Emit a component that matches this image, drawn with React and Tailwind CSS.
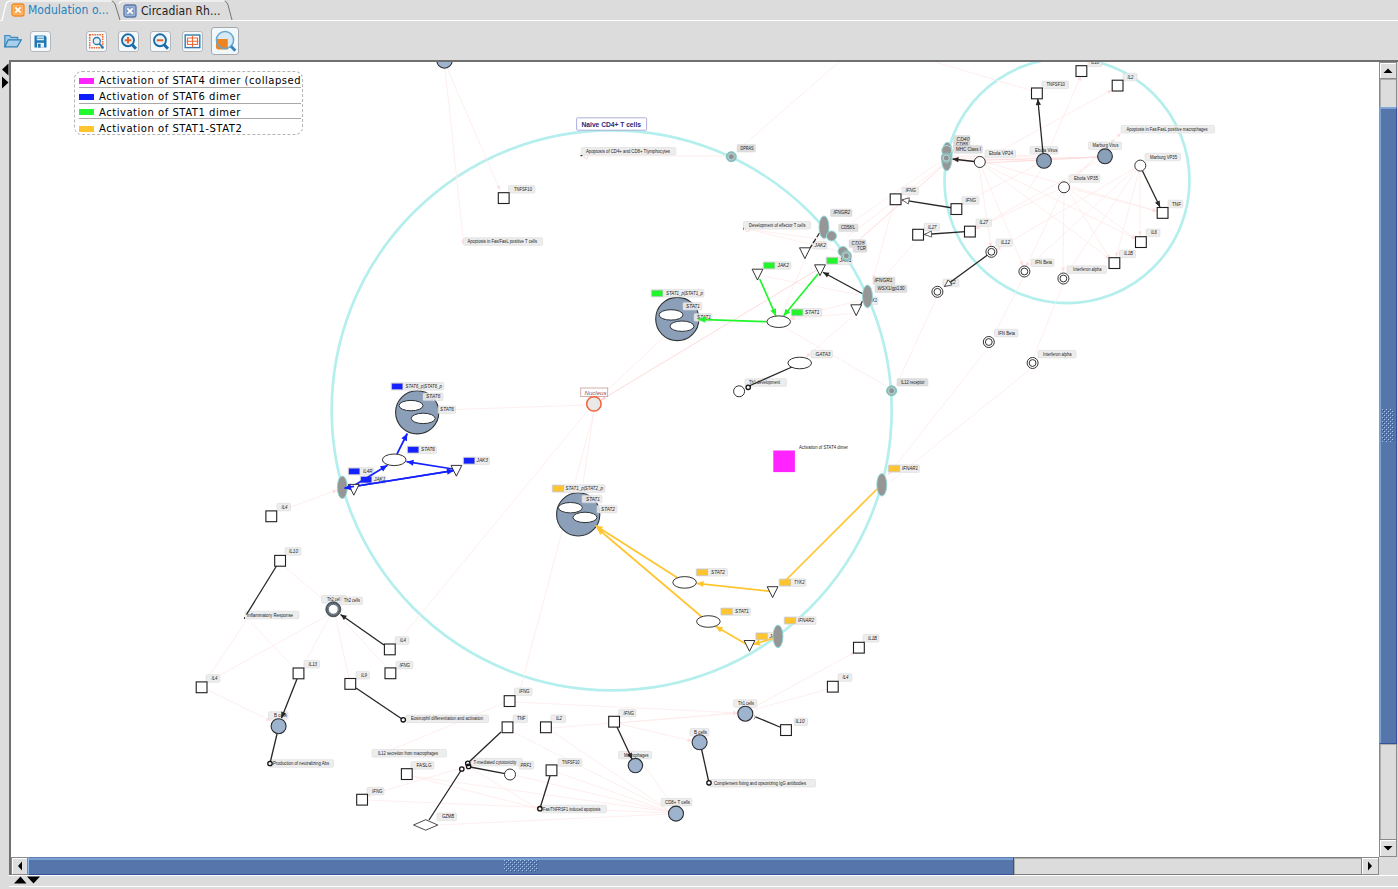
import React from "react";

const SANS = "'Liberation Sans', Arial, sans-serif";

/* ---------- network data ---------- */

// [x1, y1, x2, y2, head]
const faintEdges = [
  [445, 68, 463, 237], [447, 68, 500, 190, 1], [731, 156, 584, 156],
  [839, 62, 739, 149, 1], [946, 158, 852, 222], [747, 229, 826, 240], [747, 229, 842, 252],
  [946, 162, 848, 236], [895, 199, 873, 280, 1], [594, 403, 690, 312],
  [805, 259, 781, 316], [860, 295, 763, 276], [862, 300, 790, 318, 1], [856, 313, 790, 319, 1],
  [860, 310, 806, 357, 1], [784, 327, 886, 386], [918, 240, 871, 290],
  [1024, 276, 994, 335], [1063, 284, 1034, 356], [937, 297, 896, 386],
  [988, 348, 888, 475, 1], [1032, 368, 890, 482], [594, 411, 520, 690], [594, 411, 582, 490],
  [590, 408, 397, 643], [588, 405, 440, 410], [280, 511, 337, 490, 1],
  [1033, 91, 935, 62], [1044, 161, 1081, 76, 1], [983, 160, 1112, 90, 1], [1064, 187, 1121, 133, 1],
  [1044, 161, 952, 158], [1044, 157, 952, 156], [1044, 155, 952, 157],
  [979, 166, 991, 247, 1], [981, 166, 1023, 266, 1], [983, 165, 1110, 259, 1], [983, 164, 1136, 239, 1],
  [985, 162, 1157, 211, 1], [1044, 161, 960, 205, 1], [1105, 157, 975, 229, 1],
  [1064, 192, 1063, 272, 1], [1064, 187, 1026, 267, 1], [1064, 187, 974, 229, 1],
  [1068, 190, 1110, 259, 1], [1069, 189, 1136, 239, 1], [1069, 188, 1157, 211, 1], [1068, 185, 1115, 139, 1],
  [1140, 170, 1140, 236, 1], [1139, 171, 1116, 257, 1], [1136, 168, 1030, 265, 1],
  [1137, 169, 1067, 273, 1], [1135, 168, 996, 250, 1], [1044, 165, 1028, 190],
  [284, 566, 333, 608], [248, 618, 206, 680], [248, 619, 294, 668], [330, 614, 208, 682],
  [331, 614, 303, 666], [335, 615, 349, 678], [338, 614, 387, 668], [208, 690, 271, 721, 1],
  [509, 701, 374, 757, 1], [515, 702, 738, 713, 1], [552, 728, 738, 713, 1], [511, 731, 670, 811],
  [550, 730, 670, 811], [614, 724, 674, 807], [620, 724, 692, 741, 1], [620, 723, 738, 713, 1],
  [468, 766, 366, 796, 1], [411, 776, 540, 809], [411, 776, 670, 812], [367, 800, 670, 813],
  [438, 825, 670, 814], [514, 775, 670, 812], [556, 772, 670, 812], [466, 765, 540, 810, 1],
  [749, 710, 855, 652, 1], [749, 711, 828, 689],
];

const strongFaintEdges = [
  [820, 268, 601, 400, 1], [984, 163, 1100, 157], [952, 161, 1098, 157], [946, 163, 850, 248],
];

// [x1, y1, x2, y2, head, color]
const K = "#262626";
const B = "#1522ff";
const G = "#22f52c";
const Y = "#ffc52e";
const edges = [
  [864, 294.5, 823, 272.3, "s", K], [862.5, 301, 859.5, 307, "", K], [819.5, 233, 810, 248, "d", K],
  [792, 367, 749, 386, "", K], [956, 208.5, 902, 199.8, "o", K], [969, 231.4, 924.5, 234.5, "o", K],
  [1043, 153, 1037.8, 99, "s", K], [974, 161.5, 952.5, 159, "s", K], [1142.5, 171, 1160, 207, "s", K],
  [987.5, 255, 944.5, 286.5, "o", K],
  [276.5, 566, 246.5, 614.5, "", K], [384, 645, 340.5, 614.5, "s", K], [297, 679, 281.5, 718, "s", K],
  [277, 734, 270.3, 762, "", K], [356, 688, 402, 719, "", K],
  [501, 732, 469, 762, "", K], [505, 773.7, 470, 767, "", K], [461, 770.5, 429, 820, "", K],
  [550, 776, 540.4, 807, "", K], [617, 727, 632, 759, "s", K],
  [781, 727.5, 755.5, 716.8, "b", K], [701.5, 749, 708.6, 781, "", K],
  [397, 454, 407.3, 433.5, "s", B], [350, 488, 387.5, 465.3, "s", B], [453, 469, 406.5, 461.7, "s", B],
  [345, 488, 454, 470.5, "s", B], [453, 470.7, 344.5, 488, "s", B],
  [766.5, 321.7, 698.5, 319.4, "s", G], [759.7, 279, 776, 316, "s", G], [818, 274, 783.5, 316, "s", G],
  [677, 577.5, 595.5, 525.5, "s", Y], [702, 617, 597, 528, "s", Y], [771, 591.3, 696.5, 583.3, "s", Y],
  [746, 644, 715.5, 626.3, "s", Y], [776, 637.5, 753, 644.5, "s", Y], [877, 489, 785, 581, "", Y],
];

const squares = [
  [503.6, 198], [895.5, 199.2], [918, 234.6], [1081.3, 71], [1117.5, 85.5], [1036.8, 93.3],
  [956.3, 209], [969.8, 231.5], [1162.5, 212.8], [1140.8, 242], [1114.3, 263],
  [271.2, 516.2], [280, 560.7], [201.5, 687.2], [298.4, 673.3], [389.7, 649.3], [390.3, 673.2],
  [350.2, 683.8], [406.7, 774], [362, 799.6], [509.5, 701], [507.4, 727.2], [545.8, 727.2],
  [614, 721.6], [551.4, 770.2], [858.8, 647.6], [832.7, 686.6], [785.9, 730],
];

const triangles = [
  [804.9, 247.8], [757.5, 269.2], [820, 264.8], [856.2, 304.8],
  [456.4, 465.4], [353.8, 484.4], [772.6, 586.7], [749.5, 640.5],
];

const openOvals = [
  [778.7, 321.7], [799.7, 363], [394.2, 459.8], [684.6, 582.4], [708.4, 621.5],
];

const openCircles = [
  [979.8, 162], [1140.3, 165.6], [1064, 187.3], [739.1, 391.3], [510, 774.5],
];

const ringCircles = [
  [991.4, 251.8], [1024.4, 271.5], [1063.4, 278.5], [937.4, 291.8], [988.8, 342], [1032.6, 363],
];

const cellCircles = [
  [444.5, 60.5, 7.7], [1044, 160.9, 7.4], [1105, 156.3, 7.4], [278.6, 726.2, 7.5],
  [635.4, 765.6, 7.2], [676, 813.6, 7.5], [745.3, 713.7, 7.5], [699.6, 742.3, 7.5],
];

const complexes = [
  [417.2, 412.3, 411, 405.6, 423.2, 418.4],
  [578.2, 514.4, 570.4, 507.7, 585, 517.4],
  [677.3, 319, 671, 314.9, 682, 326.2],
];

const receptors = [
  [824, 227.2, 11.3], [867.5, 296.4, 11.3], [881.8, 484.8, 11.3], [778, 636.4, 11.3], [342.3, 487.3, 11.3],
];

const dots = [
  [748.2, 387.3], [270, 763.5], [403.2, 719.8], [467.8, 763.4], [468.6, 766.4], [461.8, 769],
  [539.9, 808.7], [709, 782.8],
];

// [x, y, width, text, textX, textWidth, swatch color, tone]
const L = "#eaeaea";
const D = "#d9d9d9";
const labels = [
  [581.3, 147.5, 94.5, "Apoptosis of CD4+ and CD8+ Tlymphocytes", 586, 84],
  [737, 144.5, 18.5, "DPRAS", 740.5, 13, 0, D],
  [508.5, 185.5, 26.5, "TNFSF10", 514, 18],
  [463.5, 237.7, 79, "Apoptosis in Fas/FasL positive T cells", 467.5, 69.5],
  [830.5, 209, 21.5, "IFNGR2", 833.5, 16.5, 0, D],
  [838.5, 224, 19.5, "CD58/L", 841, 14, 0, D],
  [849, 239.7, 17, "CD28", 851.5, 13, 0, D],
  [853, 244.7, 14, "TCR", 857, 9, 0, D],
  [812, 241.5, 15, "JAK2", 814.5, 11.5],
  [743.5, 221.5, 67, "Development of effector T cells", 749, 56.5],
  [763, 261.7, 28, "JAK2", 777.5, 11.5, G],
  [826, 257, 26, "JAK1", 839.5, 12, G],
  [791, 308.6, 31, "STAT1", 805, 14.5, G],
  [811, 350.3, 21.5, "GATA3", 815.5, 15],
  [745, 378.7, 41.5, "Th1 development", 749, 31],
  [897, 378.5, 31, "IL12 receptor", 901, 23.5, 0, D],
  [873, 277, 22, "IFNGR1", 874.5, 18, 0, D],
  [875, 285, 32, "WSX1/gp130", 877.5, 27, 0, D],
  [866, 297, 12, "JAK1", 867, 10],
  [902, 187, 16.5, "IFNG", 905.5, 10.5],
  [924, 223.3, 15.5, "IL27", 928, 8.5],
  [1088, 59, 14, "IL10", 1091, 8],
  [1123, 73.2, 14, "IL2", 1127.5, 6],
  [1042, 81, 26.5, "TNFSF10", 1046.5, 18.5],
  [1121, 125.5, 93.5, "Apoptosis in Fas/FasL positive macrophages", 1126.5, 81],
  [1030, 146.5, 28, "Ebola Virus", 1035, 22.5],
  [1088.5, 142, 33, "Marburg Virus", 1092.5, 26],
  [985, 150, 30.5, "Ebola VP24", 989, 24],
  [1145, 153.2, 35.5, "Marburg VP35", 1150, 27],
  [1069, 174.7, 31, "Ebola VP35", 1074, 24],
  [1168, 200.2, 15, "TNF", 1172, 9],
  [962, 196.7, 17, "IFNG", 965.5, 10.5],
  [976, 219, 15.5, "IL27", 979.5, 8.5],
  [996, 239, 16.5, "IL12", 1001, 9],
  [1031, 259, 23, "IFN Beta", 1035, 17],
  [1067, 265.8, 39.5, "Interferon alpha", 1073, 28.5],
  [1146, 229, 14, "IL6", 1151, 6],
  [1119.5, 250, 16, "IL1B", 1124, 9],
  [943, 279, 16, "IL12", 946.5, 9],
  [994.5, 329.3, 23.5, "IFN Beta", 998, 17],
  [1038, 350.3, 38, "Interferon alpha", 1043, 28.5],
  [953.5, 135.5, 16.5, "CD40", 956.5, 13, 0, D],
  [953.5, 141, 16.5, "CD86", 956, 12, 0, D],
  [953.5, 145.6, 29, "MHC Class I", 956, 25, 0, D],
  [391, 382.6, 53, "STAT6_p|STAT6_p", 405.5, 36.5, B],
  [423, 393, 20, "STAT6", 426, 14.5],
  [438, 406, 17.5, "STAT6", 440, 14],
  [407, 446, 29.5, "STAT6", 421, 14, B],
  [463, 457, 26.5, "JAK3", 476.5, 11.5, B],
  [348, 467.5, 26, "IL4R", 363, 9.5, B],
  [360, 476, 26, "JAK1", 374, 11.5, B],
  [552, 484.8, 53, "STAT1_p|STAT2_p", 565.5, 37.5, Y],
  [582, 495.2, 20, "STAT1", 586, 14],
  [597, 505.3, 20, "STAT2", 601, 14],
  [651, 289.5, 53, "STAT1_p|STAT1_p", 666, 37, G],
  [683, 302.5, 19, "STAT1", 686, 14],
  [694, 313.6, 18, "STAT1", 697, 14],
  [888, 464.8, 31.5, "IFNAR1", 902, 16, Y],
  [277, 503.3, 13.5, "IL4", 281.5, 6],
  [285, 547.6, 16, "IL10", 289, 9],
  [321.5, 595.5, 25, "Th2 cells", 327, 15.5],
  [340, 597, 22.5, "Th2 cells", 344, 16],
  [245, 611.2, 54, "Inflammatory Response", 247, 46],
  [395, 636.7, 14, "IL4", 400, 6],
  [396, 661.3, 17, "IFNG", 399.5, 10.5],
  [356, 671.4, 13.5, "IL9", 361, 6],
  [304, 660.4, 15.5, "IL13", 308.5, 8.5],
  [206, 674.7, 14, "IL4", 211.5, 6],
  [268.5, 711.7, 19.5, "B cells", 274, 13],
  [270, 759.7, 63.5, "Production of neutralizing Abs", 273, 56],
  [406, 715, 82.5, "Eosinophil differentiation and activation", 411, 72],
  [372, 749.5, 74.5, "IL12 secretion from macrophages", 378, 60],
  [411, 761.6, 23, "FASLG", 416.5, 15],
  [367, 787.3, 17, "IFNG", 372, 10.5],
  [514.5, 688, 17.5, "IFNG", 519, 10.5],
  [513, 715, 14.5, "TNF", 517, 8.5],
  [551, 715, 14.5, "IL2", 556, 6],
  [618.5, 709.3, 17.5, "IFNG", 623.5, 10.5],
  [471, 758.3, 51.5, "T-mediated cytotoxicity", 473.5, 43],
  [519, 761.6, 14.5, "PRF1", 520.5, 11],
  [558, 758.7, 24, "TNFSF10", 562, 17.5],
  [618.5, 751.3, 33, "Macrophages", 624, 24.5],
  [541, 805.2, 65.5, "Fas/TNFRSF1 induced apoptosis", 543, 57.5],
  [437, 813, 19.5, "GZMB", 442, 12],
  [661, 798.3, 31, "CD8+ T cells", 665, 25],
  [696, 568.5, 31.5, "STAT2", 711, 14, Y],
  [779, 578.8, 27, "TYK2", 794, 10.5, Y],
  [720.5, 607.8, 30, "STAT1", 735, 14, Y],
  [755.5, 632.5, 21, "JAK1", 769.5, 11, Y],
  [784, 616.8, 32, "IFNAR2", 798, 16, Y],
  [863, 634.5, 16, "IL1B", 868, 9],
  [838, 673.7, 14, "IL4", 842.5, 6],
  [794, 718, 13.5, "IL10", 795.5, 9],
  [733.5, 699.7, 23.5, "Th1 cells", 738, 16],
  [690, 728.5, 19, "B cells", 694, 13],
  [709.5, 779.5, 106, "Complement fixing and opsonizing IgG antibodies", 714, 92],
];

/* ---------- drawing pieces ---------- */

function Head({ e, size, fill, stroke }) {
  const [x1, y1, x2, y2] = e;
  const a = (Math.atan2(y2 - y1, x2 - x1) * 180) / Math.PI;
  return (
    <path
      d={`M0 0L${-size} ${-size * 0.44}V${size * 0.44}Z`}
      transform={`translate(${x2} ${y2}) rotate(${a})`}
      fill={fill}
      stroke={stroke}
      strokeWidth="0.8"
    />
  );
}

const isGene = (t) => /^(STAT|JAK|TYK|IFNG|IFNAR|IL\d|GATA|PRF|GZMB|CD\d+$)/.test(t) && !t.includes(" ");

function Label({ d }) {
  const [x, y, w, text, tx, tw, swatch, tone] = d;
  return (
    <g>
      <rect x={x} y={y} width={w} height="7.6" rx="1.2" fill={tone || L} fillOpacity="0.88" stroke="#d6d6d6" strokeWidth="0.5" />
      {swatch ? <rect x={x + 0.8} y={y + 0.7} width="11" height="6.2" fill={swatch} stroke="#bdbdbd" strokeWidth="0.5" /> : null}
      <text
        x={tx}
        y={y + 5.4}
        fontSize="4.6"
        fontStyle={isGene(text) ? "italic" : "normal"}
        textLength={tw}
        lengthAdjust="spacingAndGlyphs"
        fill="#222"
      >
        {text}
      </text>
    </g>
  );
}

function Receptor({ x, y, ry }) {
  return <ellipse cx={x} cy={y} rx="5" ry={ry} fill="#969696" stroke="#8fdcda" strokeWidth="0.9" />;
}

function MembraneDot({ x, y }) {
  return (
    <g>
      <circle cx={x} cy={y} r="5" fill="#a3b5b4" stroke="#74c4c1" />
      <circle cx={x} cy={y} r="3" fill="#8f9292" stroke="#b2e8e6" strokeWidth="0.8" />
    </g>
  );
}

function Network() {
  return (
    <svg width="1368" height="795" viewBox="11 62 1368 795" className="block" style={{ fontFamily: SANS }}>
      <g fill="none" stroke="#b4efed" strokeWidth="2.7">
        <circle cx="611.7" cy="410.3" r="280" />
        <circle cx="1067" cy="180.7" r="122.5" />
      </g>

      <g stroke="#ffeaea" strokeWidth="0.8">
        {faintEdges.map((e, i) => (
          <g key={i}>
            <line x1={e[0]} y1={e[1]} x2={e[2]} y2={e[3]} />
            {e[4] ? <Head e={e} size={4.5} fill="#ffdede" stroke="none" /> : null}
          </g>
        ))}
      </g>
      <g stroke="#ffd6d6" strokeWidth="0.9">
        {strongFaintEdges.map((e, i) => (
          <g key={i}>
            <line x1={e[0]} y1={e[1]} x2={e[2]} y2={e[3]} />
            {e[4] ? <Head e={e} size={4.5} fill="#ffcfcf" stroke="none" /> : null}
          </g>
        ))}
      </g>
      <g fill="#fff" stroke="#ffc4c4" strokeWidth="0.7">
        <circle cx="586" cy="156.3" r="2" />
        <circle cx="747.5" cy="229.5" r="2" />
        <circle cx="464" cy="241.5" r="2" />
      </g>
      <g fill="#222">
        <rect x="580.5" y="155" width="2" height="1.2" />
        <rect x="743" y="227.5" width="1" height="2" />
        <rect x="244" y="617" width="1" height="2" />
      </g>

      {complexes.map((c, i) => (
        <g key={i} stroke="#303438">
          <circle cx={c[0]} cy={c[1]} r="21.6" fill="#8ba0b8" strokeWidth="1.1" />
          <ellipse cx={c[2]} cy={c[3]} rx="12" ry="5.2" fill="#fff" />
          <ellipse cx={c[4]} cy={c[5]} rx="12" ry="5.2" fill="#fff" />
        </g>
      ))}

      {labels.map((d, i) => (
        <Label key={i} d={d} />
      ))}

      {edges.map((e, i) => {
        const bright = e[5] !== K;
        return (
          <g key={i}>
            <line x1={e[0]} y1={e[1]} x2={e[2]} y2={e[3]} stroke={e[5]} strokeWidth={bright ? 1.7 : 1.3} strokeDasharray={e[4] === "d" ? "5 2" : undefined} />
            {e[4] === "s" ? <Head e={e} size={bright ? 7 : 6} fill={e[5]} stroke="none" /> : null}
            {e[4] === "o" ? <Head e={e} size={7} fill="#fff" stroke="#444" /> : null}
            {e[4] === "b" ? <path d={`M${e[2] - 1.5} ${e[3] + 2.6}L${e[2]} ${e[3]}L${e[2] - 1.8} ${e[3] - 1.6}`} fill="none" stroke="#777" strokeWidth="0.8" /> : null}
          </g>
        );
      })}

      <g fill="#fff" stroke="#1d1d1d" strokeWidth="1.1">
        {squares.map(([x, y], i) => (
          <rect key={i} x={x - 5.3} y={y - 5.3} width="10.8" height="10.8" />
        ))}
        {triangles.map(([x, y], i) => (
          <path key={i} d={`M${x - 5.4} ${y}H${x + 5.4}L${x} ${y + 10.8}Z`} strokeWidth="0.9" />
        ))}
        {openOvals.map(([x, y], i) => (
          <ellipse key={i} cx={x} cy={y} rx="11.8" ry="5.8" strokeWidth="0.9" />
        ))}
        {openCircles.map(([x, y], i) => (
          <circle key={i} cx={x} cy={y} r="5.5" strokeWidth="0.9" />
        ))}
        {ringCircles.map(([x, y], i) => (
          <g key={i} strokeWidth="0.9">
            <circle cx={x} cy={y} r="5.5" />
            <circle cx={x} cy={y} r="3.4" />
          </g>
        ))}
        <path d="M413.5 825L425.7 819.7L437.8 825L425.7 830.2Z" strokeWidth="0.8" />
      </g>

      {cellCircles.map(([x, y, r], i) => (
        <circle key={i} cx={x} cy={y} r={r} fill={y < 170 && y > 100 ? "#8a9fb8" : "#9eb3cd"} stroke="#2b2e33" strokeWidth="1.1" />
      ))}
      <circle cx="333.3" cy="609.3" r="6.4" fill="#fff" stroke="#5b6670" strokeWidth="2.2" />
      <circle cx="333.3" cy="609.3" r="7.5" fill="none" stroke="#30363c" strokeWidth="0.8" />
      <circle cx="333.3" cy="609.3" r="4.9" fill="none" stroke="#30363c" strokeWidth="0.7" />

      {receptors.map(([x, y, ry], i) => (
        <Receptor key={i} x={x} y={y} ry={ry} />
      ))}
      <circle cx="831.5" cy="236" r="5" fill="#969696" stroke="#8fdcda" />
      <circle cx="843" cy="251.5" r="5" fill="#969696" stroke="#8fdcda" />
      <MembraneDot x={846.3} y={255.8} />
      <MembraneDot x={731.3} y={156.7} />
      <MembraneDot x={891.6} y={390.8} />
      <Receptor x={947.3} y={153} ry={10.8} />
      <Receptor x={946.7} y={160} ry={10.8} />
      <circle cx="946.7" cy="150.5" r="5" fill="#969696" stroke="#a8e4e2" />
      <MembraneDot x={946.3} y={158} />

      <path d="M354 486.3L344.5 488" stroke={B} strokeWidth="1.7" />
      <path d="M344 488.5l6.5-4.2 1 5.8z" fill={B} />

      <g fill="none" stroke="#111" strokeWidth="1.3">
        {dots.map(([x, y], i) => (
          <circle key={i} cx={x} cy={y} r="2.2" />
        ))}
      </g>

      <rect x="773.3" y="450.5" width="21.6" height="21.6" fill="#ff24ff" />
      <text x="799" y="449.3" fontSize="4.8" textLength="49" lengthAdjust="spacingAndGlyphs" fill="#222">
        Activation of STAT4 dimer
      </text>

      <rect x="580.7" y="388" width="27" height="8.6" fill="#fff" fillOpacity="0.6" stroke="#c79a9a" strokeWidth="0.8" />
      <text x="584.5" y="394.9" fontSize="6" fontStyle="italic" textLength="22" lengthAdjust="spacingAndGlyphs" fill="#93504f">
        Nucleus
      </text>
      <circle cx="593.9" cy="403.9" r="7.2" fill="#e9e9e9" stroke="#f4623a" strokeWidth="1.5" />

      <rect x="576.6" y="117.8" width="70" height="12.4" rx="0.8" fill="#fff" stroke="#a5a5d6" strokeWidth="0.9" />
      <text x="581.5" y="127.4" fontSize="6.8" fontWeight="bold" textLength="59.5" lengthAdjust="spacingAndGlyphs" fill="#28287c">
        Naive CD4+ T cells
      </text>
    </svg>
  );
}

/* ---------- legend ---------- */

function LegendRow({ color, text, last }) {
  return (
    <div className={"flex h-[15.8px] items-center pt-[3px] " + (last ? "" : "border-b border-[#a9a9a9]")}>
      <span className={"h-[6px] w-[15px] shrink-0 " + color} />
      <span className="ml-[5px] whitespace-nowrap text-[10px] leading-[12px] tracking-[0.53px] text-black">{text}</span>
    </div>
  );
}

function Legend() {
  return (
    <div className="absolute left-[63px] top-[9px] h-[64px] w-[229px] overflow-hidden rounded-[8px] border border-dashed border-[#b4b4b4] bg-white pl-[4px] pr-[1px] font-['DejaVu_Sans',sans-serif]">
      <LegendRow color="bg-[#ff24ff]" text="Activation of STAT4 dimer (collapsed" />
      <LegendRow color="bg-[#0f1eff]" text="Activation of STAT6 dimer" />
      <LegendRow color="bg-[#22f932]" text="Activation of STAT1 dimer" />
      <LegendRow color="bg-[#ffc52e]" text="Activation of STAT1-STAT2" last />
    </div>
  );
}

/* ---------- tabs and toolbar ---------- */

function CloseIcon({ orange }) {
  const c = orange ? "#ef8a28" : "#5a78ac";
  const f = orange ? "#ffb765" : "#9db3d6";
  return (
    <svg width="14" height="14" viewBox="0 0 14 14" className="shrink-0">
      <rect x="1" y="1" width="12" height="12" rx="2" fill={f} stroke={c} strokeWidth="1.3" />
      <rect x="3.3" y="3.3" width="7.4" height="7.4" fill={c} fillOpacity="0.5" />
      <path d="M4.3 4.3l5.4 5.4M9.7 4.3l-5.4 5.4" stroke="#fff" strokeWidth="1.8" />
    </svg>
  );
}

function Tabs() {
  return (
    <div className="relative flex h-[21px] font-['DejaVu_Sans_Condensed','DejaVu_Sans',sans-serif] text-[12px] leading-[18px]">
      <svg width="1398" height="21" viewBox="0 0 1398 21" className="absolute left-0 top-0">
        <path d="M0 20.5H2L6 4Q7 1 10 1H111" fill="none" stroke="#fff" strokeWidth="1.2" />
        <path d="M112 1Q114 2 115 4L120 20" fill="none" stroke="#757575" />
        <path d="M120 20.5H1398M119 4Q120 1 123 1H224" fill="none" stroke="#fff" strokeWidth="1.2" />
        <path d="M225 1Q227 2 228 5L232 20" fill="none" stroke="#757575" />
      </svg>
      <div className="relative flex h-[20px] w-[112px] items-center pl-[11px]">
        <CloseIcon orange />
        <span className="ml-[3px] whitespace-nowrap tracking-[0.05px] text-[#2381bd]">Modulation o...</span>
      </div>
      <div className="relative flex h-[20px] w-[120px] items-center pl-[11px] pt-[1px]">
        <CloseIcon />
        <span className="ml-[4px] whitespace-nowrap tracking-[0.05px] text-[#222]">Circadian Rh...</span>
      </div>
    </div>
  );
}

function ToolButton({ children, className }) {
  return (
    <div className={"flex h-[21px] w-[21px] shrink-0 items-center justify-center rounded-[3px] border border-[#b3b8bd] bg-[#f6f9fb] " + className}>
      {children}
    </div>
  );
}

function Toolbar() {
  return (
    <div className="flex h-[39px] items-center pl-[4px] pt-[1px]">
      <svg width="18" height="14" viewBox="0 0 18 14" className="shrink-0">
        <path d="M0.8 12.5V1.5h5l1.4 1.8h6.5v2.6" fill="#9cc6e2" stroke="#3d8bbd" strokeWidth="1.2" />
        <path d="M0.8 12.8L4.3 5.8H17.3L13.2 12.8Z" fill="#a8d0ea" stroke="#2b7fb6" strokeWidth="1.2" />
      </svg>
      <ToolButton className="ml-[8px]">
        <svg width="15" height="15" viewBox="0 0 15 15">
          <path d="M1.5 1.5h10.5l1.5 1.5v10.5h-12z" fill="#2077b2" />
          <rect x="3.8" y="2.3" width="7.2" height="4" fill="#d9ecf7" />
          <path d="M4 4.2h7" stroke="#4a94c4" />
          <rect x="4" y="8.8" width="7" height="4.7" fill="#e5f2fa" />
          <rect x="5" y="9.8" width="2.6" height="3.7" fill="#2077b2" />
        </svg>
      </ToolButton>
      <ToolButton className="ml-[35px]">
        <svg width="17" height="17" viewBox="0 0 17 17">
          <rect x="1.7" y="1.7" width="13" height="13" fill="none" stroke="#ee6a35" strokeWidth="1.5" strokeDasharray="1.6 0.8" />
          <circle cx="8.8" cy="8" r="3.5" fill="#e8f4fc" stroke="#2b79ac" strokeWidth="1.3" />
          <path d="M11.3 10.7l4.2 4.6" stroke="#2b79ac" strokeWidth="2" />
        </svg>
      </ToolButton>
      <ToolButton className="ml-[11px]">
        <svg width="19" height="19" viewBox="0 0 19 19">
          <circle cx="9" cy="8.3" r="6" fill="#e8f4fc" stroke="#1d6ca9" strokeWidth="1.9" />
          <path d="M13.2 12.8l3.8 4" stroke="#1d6ca9" strokeWidth="3" />
          <path d="M9 5v6.6M5.7 8.3h6.6" stroke="#ee5f28" strokeWidth="2" />
        </svg>
      </ToolButton>
      <ToolButton className="ml-[11px]">
        <svg width="19" height="19" viewBox="0 0 19 19">
          <circle cx="9" cy="8.3" r="6" fill="#e8f4fc" stroke="#1d6ca9" strokeWidth="1.9" />
          <path d="M13.2 12.8l3.8 4" stroke="#1d6ca9" strokeWidth="3" />
          <path d="M5.7 8.3h6.6" stroke="#ee5f28" strokeWidth="2" />
        </svg>
      </ToolButton>
      <ToolButton className="ml-[11px]">
        <svg width="17" height="17" viewBox="0 0 17 17">
          <rect x="1.2" y="2" width="14.6" height="12.6" fill="#fff" stroke="#2a7eb5" strokeWidth="1.4" />
          <path d="M8.5 2.5v12M2.5 8.3h12M3.5 5h10v6.5h-10z" fill="none" stroke="#ee6a35" strokeWidth="1.1" />
        </svg>
      </ToolButton>
      <div className="ml-[8px] flex h-[28px] w-[28px] shrink-0 items-center justify-center rounded-[3px] border-[1.5px] border-[#a5a9ad] bg-[#f1f8fc]">
        <svg width="24" height="24" viewBox="0 0 24 24">
          <circle cx="12" cy="11" r="8.6" fill="#d5eaf6" />
          <path d="M3 10H14.8V20.5H5.5Q3 20.5 3 18Z" fill="#ee8420" />
          <circle cx="12" cy="11" r="8.6" fill="none" stroke="#69a6cc" strokeWidth="1.5" />
          <path d="M18 17.3l4.3 4.4" stroke="#3583b7" strokeWidth="3" />
        </svg>
      </div>
    </div>
  );
}

/* ---------- scroll bars ---------- */

function Grip({ id, w, h }) {
  return (
    <svg width={w} height={h}>
      <defs>
        <pattern id={id} width="4" height="4" patternUnits="userSpaceOnUse">
          <path d="M0 0h1v1h-1zM2 2h1v1h-1z" fill="#a9c8f0" />
          <path d="M1 1h1v1h-1zM3 3h1v1h-1z" fill="#34549a" />
        </pattern>
      </defs>
      <rect width={w} height={h} fill={`url(#${id})`} />
    </svg>
  );
}

function ArrowButton({ d, className }) {
  return (
    <div className={"flex shrink-0 items-center justify-center border border-[#8a8a8a] bg-[#dedede] shadow-[inset_1px_1px_0_#fff] " + className}>
      <svg width="10" height="10" viewBox="0 0 10 10">
        <path d={d} fill="#000" />
      </svg>
    </div>
  );
}

function VerticalBar() {
  return (
    <div className="flex w-[18px] shrink-0 flex-col">
      <ArrowButton d="M5 2.5L9.5 7H0.5Z" className="h-[17px] w-[18px]" />
      <div className="h-[28px] border-x border-[#8a8a8a] bg-[#dcdcdc] shadow-[inset_1px_1px_0_#adadad]" />
      <div className="flex h-[637px] items-center justify-center border border-[#36519b] border-l-[#7f9bc9] border-t-[#83a9d8] bg-[#5675aa] shadow-[inset_1px_1px_0_#7ba0d2]">
        <Grip id="gv" w={12} h={33} />
      </div>
      <div className="h-[95px] border-x border-[#8a8a8a] bg-[#dcdcdc] shadow-[inset_1px_1px_0_#adadad]" />
      <ArrowButton d="M5 7.5L9.5 3H0.5Z" className="h-[18px] w-[18px]" />
    </div>
  );
}

function HorizontalBar() {
  return (
    <div className="flex h-[18px]">
      <ArrowButton d="M3 5L7 0.5V9.5Z" className="h-[18px] w-[17px]" />
      <div className="flex h-[18px] w-[986px] items-center justify-center border border-[#36519b] border-l-[#8fbbe8] border-t-[#5f7fb0] bg-[#5675aa] shadow-[inset_0_2px_0_#7ba0d2]">
        <Grip id="gh" w={34} h={12} />
      </div>
      <div className="h-[18px] w-[347px] border-y border-[#7d7d7d] bg-[#dcdcdc] shadow-[inset_1px_1px_0_#adadad]" />
      <ArrowButton d="M7 5L3 0.5V9.5Z" className="h-[18px] w-[18px]" />
    </div>
  );
}

/* ---------- page ---------- */

export default function App() {
  return (
    <div className="flex h-[889px] w-[1398px] flex-col overflow-hidden bg-[#dcdcdc]">
      <Tabs />
      <Toolbar />
      <div className="flex h-[829px]">
        <div className="w-[9px] shrink-0 pt-[3px]">
          <svg width="9" height="26" viewBox="0 0 9 26">
            <path d="M8.5 0.5V12.5L2 6.5ZM2 13.5V25.5L8.5 19.5Z" fill="#000" />
          </svg>
        </div>
        <div className="flex w-[1389px] flex-col">
          <div className="flex h-[815px] flex-col border-l-2 border-t-2 border-[#707070]">
            <div className="flex h-[795px]">
              <div className="relative h-[795px] w-[1368px] shrink-0 overflow-hidden bg-white">
                <Network />
                <Legend />
              </div>
              <VerticalBar />
            </div>
            <HorizontalBar />
          </div>
          <div className="flex h-[12px] items-start border-b border-t border-white pl-[5px]">
            <svg width="26" height="8" viewBox="0 0 26 8">
              <path d="M0 7.5L6.5 0.5L12.5 7.5ZM13 0.5H26L19.5 7.5Z" fill="#000" />
            </svg>
          </div>
        </div>
      </div>
    </div>
  );
}
